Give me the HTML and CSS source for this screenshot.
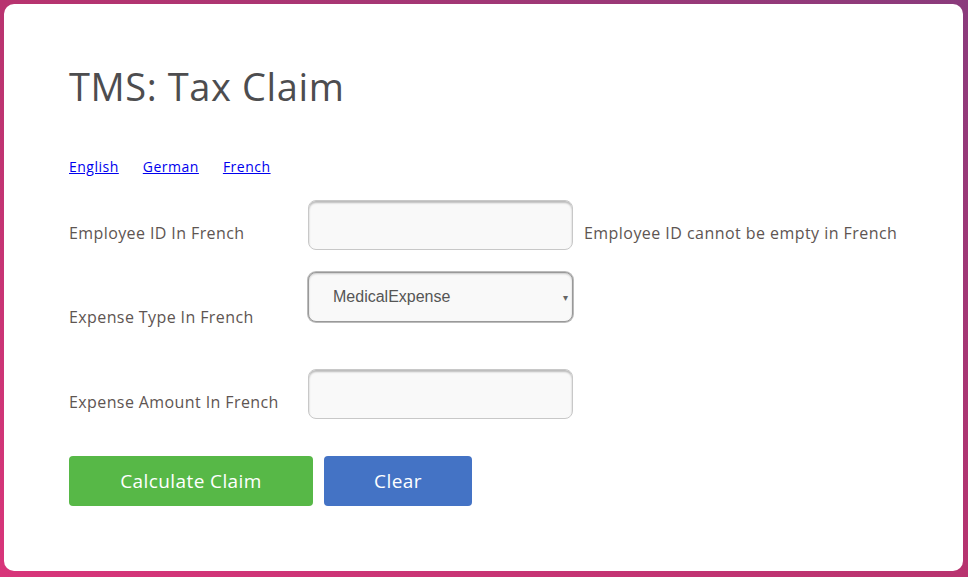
FILE: index.html
```html
<!DOCTYPE html>
<html>
<head>
<meta charset="utf-8">
<link rel="stylesheet" href="styles.css">
</head>
<body>
<div class="card">
  <h1 class="title">TMS: Tax Claim</h1>
  <nav class="langs">
    <a href="#">English</a>
    <a href="#">German</a>
    <a href="#">French</a>
  </nav>
  <form class="form">
    <div class="row row1">
      <label class="label">Employee ID In French</label>
      <input class="field" type="text">
      <span class="error">Employee ID cannot be empty in French</span>
    </div>
    <div class="row row2">
      <label class="label label-low">Expense Type In French</label>
      <div class="field select"><span>MedicalExpense</span><span class="caret">▾</span></div>
    </div>
    <div class="row row3">
      <label class="label">Expense Amount In French</label>
      <input class="field" type="text">
    </div>
    <div class="buttons">
      <button type="button" class="btn btn-green">Calculate Claim</button>
      <button type="button" class="btn btn-blue">Clear</button>
    </div>
  </form>
</div>
</body>
</html>
```
FILE: styles.css
```css
html, body { margin: 0; padding: 0; }
body {
  width: 968px;
  height: 577px;
  background: linear-gradient(to top right, #d8357a 0%, #b8336f 50%, #8a3b7c 100%);
  padding: 4px 5px 6px 4px;
  box-sizing: border-box;
  font-family: "Open Sans", sans-serif;
}
.card {
  background: #fff;
  border-radius: 10px;
  height: 567px;
  box-sizing: border-box;
  padding: 60px 0 0 65px;
  display: flex;
  flex-direction: column;
}
.title {
  margin: 0;
  font-weight: 400;
  font-size: 38px;
  line-height: 44px;
  color: #4d4d4f;
  letter-spacing: 0.6px;
}
.langs {
  margin-top: 49px;
  display: flex;
  gap: 24px;
  font-size: 14px;
  line-height: 20px;
  letter-spacing: 0.5px;
}
.langs a { color: #0000ee; text-decoration: underline; }
.form { display: flex; flex-direction: column; margin-top: 23px; }
.row { display: flex; align-items: flex-end; }
.row2 { margin-top: 22px; }
.row3 { margin-top: 47px; }
.label {
  width: 239px;
  font-size: 16px;
  line-height: 22px;
  letter-spacing: 0.4px;
  color: #5e5552;
  padding-bottom: 6px;
}
.label-low { padding-bottom: 0; margin-bottom: -6px; }
.field {
  width: 265px;
  height: 50px;
  box-sizing: border-box;
  border: 1px solid #c8c8c8;
  border-radius: 8px;
  background: #f9f9f9;
  box-shadow: inset 0 2px 2px rgba(0,0,0,0.25);
  margin: 0;
  padding: 0 24px;
  font-size: 16px;
}
.select {
  display: flex;
  align-items: center;
  justify-content: space-between;
  font-family: "Liberation Sans", Arial, sans-serif;
  color: #555;
  padding: 0 4px 0 24px;
  box-shadow: inset 0 1px 2px rgba(0,0,0,0.2), 0 0 0 1px #bbb;
  border-color: #999;
}
.caret { font-size: 10px; color: #666; }
.error {
  margin-left: 11px;
  font-size: 16px;
  line-height: 22px;
  letter-spacing: 0.45px;
  color: #5e5552;
  padding-bottom: 6px;
}
.buttons { display: flex; gap: 11px; margin-top: 37px; }
.btn {
  height: 50px;
  border: none;
  border-radius: 4px;
  color: #fff;
  font-family: "Open Sans", sans-serif;
  font-size: 19px;
  font-weight: 500;
  letter-spacing: 0.4px;
}
.btn-green { width: 244px; background: #57b847; }
.btn-blue { width: 148px; background: #4473c5; }
```
